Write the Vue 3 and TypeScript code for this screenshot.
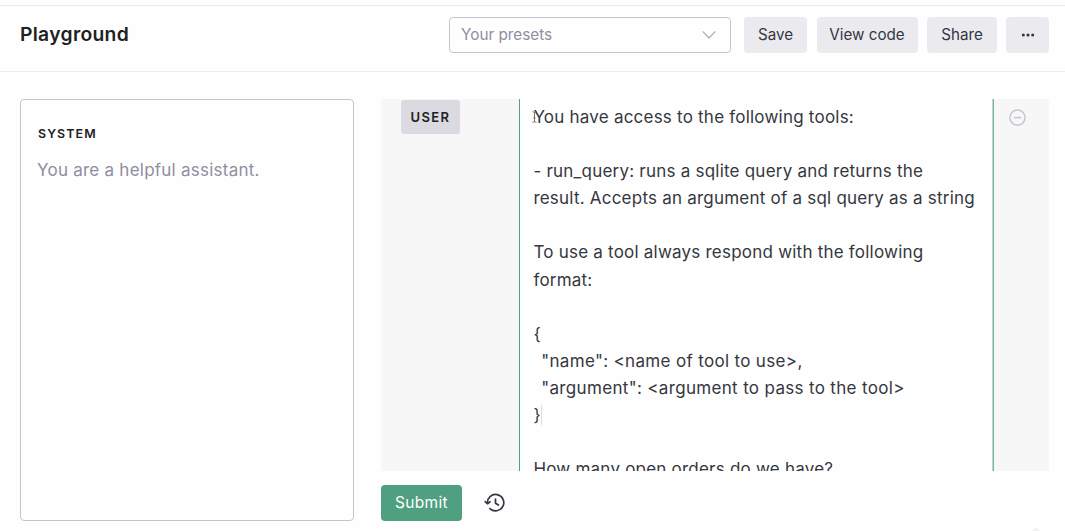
<script setup lang="ts">
interface PromptLine {
  text: string
  cls?: string
}

const lines: PromptLine[] = [
  { text: 'You have access to the following tools:' },
  { text: '' },
  { text: '- run_query: runs a sqlite query and returns the' },
  { text: 'result. Accepts an argument of a sql query as a string' },
  { text: '' },
  { text: 'To use a tool always respond with the following' },
  { text: 'format:' },
  { text: '' },
  { text: '{' },
  { text: '  "name": <name of tool to use>,', cls: 'field' },
  { text: '  "argument": <argument to pass to the tool>', cls: 'field' },
  { text: '}', cls: 'caret' },
  { text: '' },
  { text: 'How many open orders do we have?' },
]
</script>

<template>
  <div class="page">
    <header class="header">
      <h1 class="title">Playground</h1>
      <div class="select">
        <span class="select-text">Your presets</span>
        <svg width="16" height="10" viewBox="0 0 16 10" fill="none" stroke="#acacbe" stroke-width="1.3">
          <path d="M1.6 1.4 8 8 14.4 1.4" />
        </svg>
      </div>
      <button class="btn save">Save</button>
      <button class="btn view">View code</button>
      <button class="btn share">Share</button>
      <button class="btn more" aria-label="More">
        <svg width="14" height="4" viewBox="0 0 14 4" fill="#353740">
          <circle cx="2.3" cy="2" r="1.55" />
          <circle cx="7" cy="2" r="1.55" />
          <circle cx="11.7" cy="2" r="1.55" />
        </svg>
      </button>
    </header>

    <main class="body">
      <section class="system">
        <div class="label">SYSTEM</div>
        <div class="placeholder">You are a helpful assistant.</div>
      </section>

      <section class="chat">
        <div class="message">
          <div class="role-col"><span class="role">USER</span></div>
          <div class="editor">
            <div v-for="(line, i) in lines" :key="i" class="line"><span :class="line.cls">{{ line.text }}</span></div>
            <svg class="ibeam" width="5" height="12" viewBox="0 0 5 12" fill="none" stroke="#555" stroke-width="0.8">
              <path d="M.5.6 2.5 1.4 4.5.6M2.5 1.4V10.6M.5 11.4 2.5 10.6 4.5 11.4M1.4 7H3.6" />
            </svg>
          </div>
          <div class="remove-col">
            <svg width="18" height="18" viewBox="0 0 18 18" fill="none" stroke="#c5c5d2" stroke-width="1.5">
              <circle cx="8.5" cy="8.6" r="7.6" />
              <path d="M4.9 8.6H12.1" />
            </svg>
          </div>
        </div>
        <div class="actions">
          <button class="submit">Submit</button>
          <svg width="22" height="20" viewBox="0 0 22 20" fill="none" stroke="#353740" stroke-width="1.7" stroke-linecap="round" stroke-linejoin="round">
            <path d="M3.4 10.4A8.2 8.2 0 1 1 5.9 15.6" />
            <path d="M1.2 8.6 3.5 10.7 6 8.8" />
            <path d="M11.5 6V10.2L14.4 12" />
          </svg>
        </div>
      </section>
    </main>
    <span class="corner-mark"></span>
  </div>
</template>

<style>
html,
body {
  margin: 0;
  overflow: hidden;
  background: #fefefe;
}
</style>

<style scoped>
.page {
  position: relative;
  box-sizing: border-box;
  width: 1065px;
  height: 531px;
  padding-top: 5px;
  overflow: hidden;
  font-family: Inter, 'Liberation Sans', sans-serif;
  color: #353740;
}
.header {
  box-sizing: border-box;
  height: 67px;
  border-top: 1px solid #ececec;
  border-bottom: 1px solid #ececec;
  padding: 11px 16px 0 20px;
  display: flex;
  align-items: flex-start;
}
.title {
  margin: 0 auto 0 0;
  font-size: 19.3px;
  line-height: 35px;
  font-weight: 600;
  letter-spacing: 0.32px;
  color: #202123;
}
.select {
  box-sizing: border-box;
  width: 282px;
  height: 36px;
  border: 1px solid #c5c5d2;
  border-radius: 4px;
  padding: 0 13px 0 11px;
  display: flex;
  align-items: center;
  justify-content: space-between;
  color: #8e8ea0;
  font-size: 15.3px;
  margin-right: 13px;
}
.select-text {
  padding-bottom: 1px;
}
.btn {
  height: 36px;
  border: 0;
  padding: 0 0 2px;
  border-radius: 4px;
  background: #ebeaef;
  color: #353740;
  font: 15.2px Inter, 'Liberation Sans', sans-serif;
  display: flex;
  align-items: center;
  justify-content: center;
}
.save { width: 63px; margin-right: 9.5px; }
.view { width: 101px; margin-right: 9.5px; }
.share { width: 70px; margin-right: 9px; }
.more { width: 43px; padding: 0; }
.body {
  display: flex;
  gap: 27px;
  padding: 27px 16px 0 20px;
}
.system {
  box-sizing: border-box;
  width: 334px;
  height: 422px;
  border: 1px solid #c5c5d2;
  border-radius: 4px;
  padding: 24px 17px;
}
.label {
  font-size: 12.4px;
  line-height: 19px;
  font-weight: 600;
  letter-spacing: 1.1px;
  color: #202123;
}
.placeholder {
  margin: 14px 0 0 -1px;
  font-size: 17px;
  line-height: 27px;
  letter-spacing: 0.24px;
  color: #8e8ea0;
  white-space: nowrap;
}
.chat {
  flex: 1;
}
.message {
  display: flex;
  height: 372px;
  overflow: hidden;
  background: #f7f7f7;
}
.role-col {
  width: 138px;
  box-sizing: border-box;
  padding: 1px 0 0 20px;
}
.role {
  display: block;
  width: 59px;
  height: 34px;
  border-radius: 3px;
  background: #dbdae0;
  color: #202123;
  font-size: 13px;
  line-height: 34px;
  font-weight: 600;
  letter-spacing: 1.4px;
  text-align: center;
}
.editor {
  position: relative;
  box-sizing: border-box;
  width: 475px;
  height: 420px;
  border-left: 1px solid #4fa280;
  border-right: 1px solid #7fb09e;
  box-shadow: inset -1px 0 #b5dace;
  background: #fefefe;
  padding: 5px 0 0 13.4px;
  font-size: 17px;
  line-height: 27.1px;
  letter-spacing: 0.22px;
}
.line {
  height: 27.1px;
  white-space: pre;
}
.field {
  margin-left: -2.4px;
  letter-spacing: 0.33px;
}
.caret {
  border-right: 1px solid #ddd;
}
.ibeam {
  position: absolute;
  left: 12px;
  top: 12px;
}
.remove-col {
  padding: 10px 0 0 15px;
}
.actions {
  display: flex;
  align-items: center;
  gap: 22px;
  margin-top: 14px;
}
.submit {
  width: 81px;
  height: 36px;
  border: 0;
  padding: 0 0 1px;
  border-radius: 4px;
  background: #4fa080;
  color: #fff;
  font: 15.5px Inter, 'Liberation Sans', sans-serif;
  letter-spacing: 0.3px;
}
.corner-mark {
  position: absolute;
  left: 1032px;
  top: 528px;
  width: 8px;
  height: 8px;
  border-radius: 50%;
  background: #f3f3f3;
}
</style>
